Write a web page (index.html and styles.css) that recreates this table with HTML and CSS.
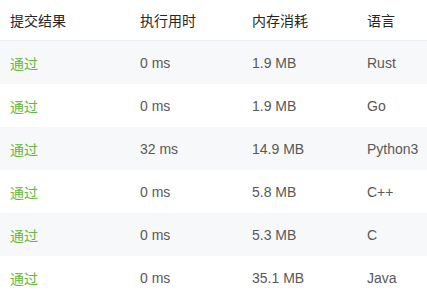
FILE: index.html
```html
<!DOCTYPE html>
<html lang="zh">
<head>
<meta charset="utf-8">
<link rel="stylesheet" href="styles.css">
</head>
<body>
<div class="table">
  <div class="row head">
    <div>提交结果</div><div>执行用时</div><div>内存消耗</div><div>语言</div>
  </div>
  <div class="row odd"><div class="ok">通过</div><div>0 ms</div><div>1.9 MB</div><div>Rust</div></div>
  <div class="row"><div class="ok">通过</div><div>0 ms</div><div>1.9 MB</div><div>Go</div></div>
  <div class="row odd"><div class="ok">通过</div><div>32 ms</div><div>14.9 MB</div><div>Python3</div></div>
  <div class="row"><div class="ok">通过</div><div>0 ms</div><div>5.8 MB</div><div>C++</div></div>
  <div class="row odd"><div class="ok">通过</div><div>0 ms</div><div>5.3 MB</div><div>C</div></div>
  <div class="row"><div class="ok">通过</div><div>0 ms</div><div>35.1 MB</div><div>Java</div></div>
</div>
</body>
</html>
```
FILE: styles.css
```css
html, body { margin: 0; padding: 0; background: #fff; }
body {
  font-family: "Liberation Sans", "Noto Sans CJK SC", sans-serif;
  font-size: 14px;
  color: #595959;
}
.table { display: flex; flex-direction: column; }
.row {
  display: grid;
  grid-template-columns: 130px 112px 115px 1fr;
  align-items: center;
  height: 43px;
  padding-left: 10px;
  box-sizing: border-box;
}
.row.head {
  height: 41px;
  color: #262626;
  border-bottom: 1px solid #ebedf0;
}
.row.odd { background: #f7f8fa; }
.ok { color: #62b93a; }
```
